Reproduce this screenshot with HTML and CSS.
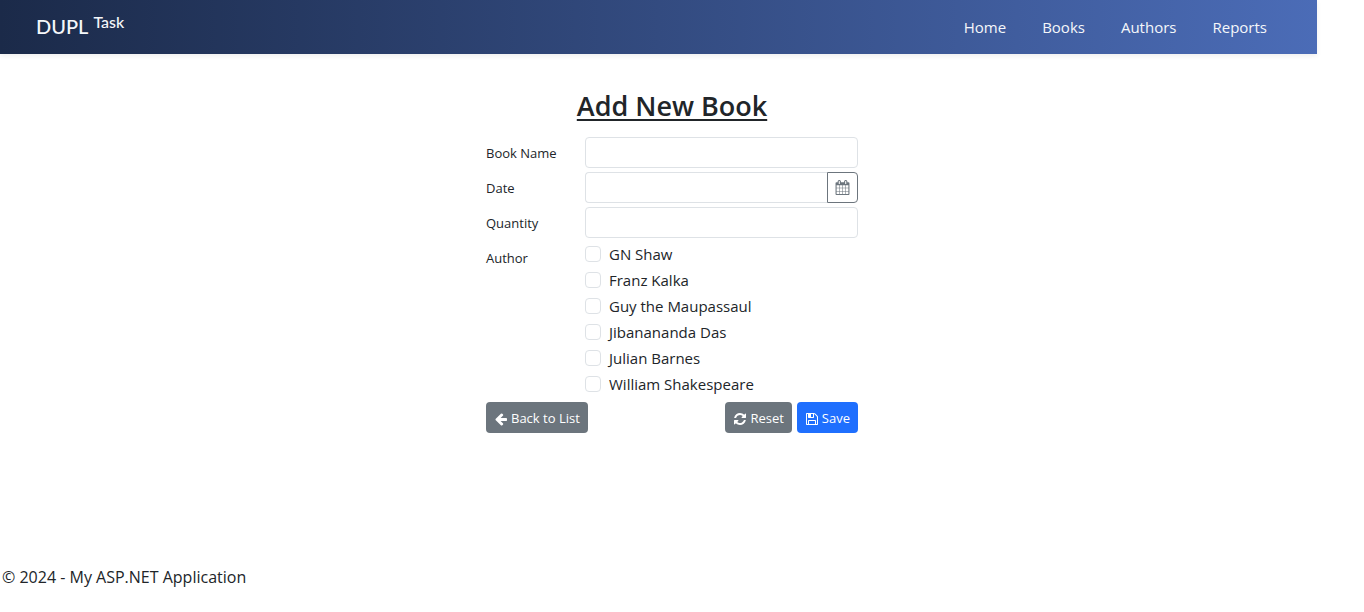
FILE: index.html
```html
<!DOCTYPE html>
<html lang="en">
<head>
<meta charset="utf-8">
<meta name="viewport" content="width=device-width, initial-scale=1">
<title>Add New Book</title>
<link rel="stylesheet" href="styles.css">
</head>
<body>
<header class="navbar">
  <a class="brand" href="#"><span class="brand-main">DUPL</span> <span class="brand-sup">Task</span></a>
  <nav class="nav">
    <a href="#">Home</a>
    <a href="#">Books</a>
    <a href="#">Authors</a>
    <a href="#">Reports</a>
  </nav>
</header>
<main class="content">
  <form class="book-form">
    <h1 class="title">Add New Book</h1>
    <div class="row">
      <label class="label" for="name">Book Name</label>
      <input class="control" id="name" type="text">
    </div>
    <div class="row">
      <label class="label" for="date">Date</label>
      <div class="input-group">
        <input class="control" id="date" type="text">
        <button class="date-btn" type="button" aria-label="Pick a date">
          <svg class="icon" viewBox="0 0 1792 1792"><path d="M192 1664h288v-288h-288v288zm352 0h320v-288h-320v288zm-352-352h288v-320h-288v320zm352 0h320v-320h-320v320zm-352-384h288v-288h-288v288zm736 736h320v-288h-320v288zm-384-736h320v-288h-320v288zm768 736h288v-288h-288v288zm-384-352h320v-320h-320v320zm-352-864v-288q0-13-9.5-22.5t-22.5-9.5h-64q-13 0-22.5 9.5t-9.5 22.5v288q0 13 9.5 22.5t22.5 9.5h64q13 0 22.5-9.5t9.5-22.5zm736 864h288v-320h-288v320zm-384-384h320v-288h-320v288zm384 0h288v-288h-288v288zm32-480v-288q0-13-9.5-22.5t-22.5-9.5h-64q-13 0-22.5 9.5t-9.5 22.5v288q0 13 9.5 22.5t22.5 9.5h64q13 0 22.5-9.5t9.5-22.5zm384-64v1280q0 52-38 90t-90 38h-1408q-52 0-90-38t-38-90v-1280q0-52 38-90t90-38h128v-96q0-66 47-113t113-47h64q66 0 113 47t47 113v96h384v-96q0-66 47-113t113-47h64q66 0 113 47t47 113v96h128q52 0 90 38t38 90z"/></svg>
        </button>
      </div>
    </div>
    <div class="row">
      <label class="label" for="quantity">Quantity</label>
      <input class="control" id="quantity" type="text">
    </div>
    <div class="row" role="group" aria-labelledby="author-label">
      <span class="label" id="author-label">Author</span>
      <div class="checks">
        <label class="check"><input type="checkbox">GN Shaw</label>
        <label class="check"><input type="checkbox">Franz Kalka</label>
        <label class="check"><input type="checkbox">Guy the Maupassaul</label>
        <label class="check"><input type="checkbox">Jibanananda Das</label>
        <label class="check"><input type="checkbox">Julian Barnes</label>
        <label class="check"><input type="checkbox">William Shakespeare</label>
      </div>
    </div>
    <div class="actions">
      <a class="btn back" href="#"><svg class="icon" viewBox="0 0 1792 1792"><path d="M1664 896v128q0 53-32.5 90.5t-84.5 37.5h-704l293 294q38 36 38 90t-38 90l-75 76q-37 37-90 37-52 0-91-37l-651-652q-37-37-37-90 0-52 37-91l651-650q38-38 91-38 52 0 90 38l75 74q38 38 38 91t-38 91l-293 293h704q52 0 84.5 37.5t32.5 90.5z"/></svg>Back to List</a>
      <button class="btn" type="reset"><svg class="icon" viewBox="0 0 1792 1792"><path d="M1639 1056q0 5-1 7-64 268-268 434.5t-478 166.5q-146 0-282.5-55t-243.5-157l-129 129q-19 19-45 19t-45-19-19-45v-448q0-26 19-45t45-19h448q26 0 45 19t19 45-19 45l-137 137q71 66 161 102t187 36q134 0 250-65t186-179q11-17 53-117 8-23 30-23h192q13 0 22.5 9.5t9.5 22.5zm25-800v448q0 26-19 45t-45 19h-448q-26 0-45-19t-19-45 19-45l138-138q-148-137-349-137-134 0-250 65t-186 179q-11 17-53 117-8 23-30 23h-199q-13 0-22.5-9.5t-9.5-22.5v-7q65-268 270-434.5t480-166.5q146 0 284 55.5t245 156.5l130-129q19-19 45-19t45 19 19 45z"/></svg>Reset</button>
      <button class="btn primary" type="submit"><svg class="icon" viewBox="0 0 1792 1792"><path d="M512 1536h768v-384h-768v384zm896 0h128v-896q0-14-10-38.5t-20-34.5l-281-281q-10-10-34-20t-39-10v416q0 40-28 68t-68 28h-576q-40 0-68-28t-28-68v-416h-128v1280h128v-416q0-40 28-68t68-28h832q40 0 68 28t28 68v416zm-384-928v-320q0-13-9.5-22.5t-22.5-9.5h-192q-13 0-22.5 9.5t-9.5 22.5v320q0 13 9.5 22.5t22.5 9.5h192q13 0 22.5-9.5t9.5-22.5zm640 32v928q0 40-28 68t-68 28h-1344q-40 0-68-28t-28-68v-1344q0-40 28-68t68-28h928q40 0 88 20t76 48l280 280q28 28 48 76t20 88z"/></svg>Save</button>
    </div>
  </form>
</main>
<footer class="footer">© 2024 - My ASP.NET Application</footer>
</body>
</html>
```
FILE: styles.css
```css
* {
  box-sizing: border-box;
}

body {
  margin: 0;
  min-height: 100vh;
  display: flex;
  flex-direction: column;
  background: #fff;
  color: #212529;
  font-family: "Segoe UI", "Open Sans", "Noto Sans", sans-serif;
  font-size: 15px;
  line-height: 24px;
}

.navbar {
  display: flex;
  align-items: flex-start;
  justify-content: space-between;
  margin-right: 47px;
  padding: 11px 50px 12px 36px;
  min-height: 54px;
  background: linear-gradient(to right, #1b2a49, #4b6cb7);
  box-shadow: 0 2px 5px rgba(0, 0, 0, 0.07);
}

.brand {
  display: flex;
  align-items: flex-start;
  gap: 5px;
  color: #f5f7fa;
  font-family: Lato, sans-serif;
  font-weight: 500;
  text-decoration: none;
}

.brand-main {
  font-size: 20px;
  line-height: 31px;
}

.brand-sup {
  font-size: 16px;
  line-height: 21px;
}

.nav {
  display: flex;
  gap: 36px;
  padding-top: 4px;
}

.nav a {
  color: #f5f7fa;
  font-weight: 500;
  text-decoration: none;
}

.content {
  flex: 1;
  padding: 32px 20px 24px 0;
}

.book-form {
  display: flex;
  flex-direction: column;
  gap: 4px;
  max-width: 372px;
  margin: 0 auto;
}

.title {
  margin: 0 0 8px;
  font-size: 27px;
  font-weight: 600;
  line-height: 39px;
  text-align: center;
  text-decoration: underline;
  text-decoration-thickness: 2px;
  text-underline-offset: 3px;
}

.row {
  display: grid;
  grid-template-columns: 99px 1fr;
}

.label {
  padding: 6px 0 4px;
  font-size: 13px;
  line-height: 21px;
}

.control {
  width: 100%;
  min-width: 0;
  height: 31px;
  padding: 4px 8px;
  border: 1px solid #dee2e6;
  border-radius: 4px;
  background: #fff;
  color: inherit;
  font: inherit;
}

.input-group {
  display: flex;
}

.input-group .control {
  border-right: 0;
  border-radius: 4px 0 0 4px;
}

.date-btn {
  display: flex;
  align-items: center;
  justify-content: center;
  flex: 0 0 31px;
  padding: 0;
  border: 1px solid #6c757d;
  border-radius: 0 4px 4px 0;
  background: #fff;
  color: #6c757d;
}

.icon {
  width: 14px;
  height: 14px;
  fill: currentColor;
}

.date-btn .icon {
  width: 15px;
  height: 15px;
}

.checks {
  display: flex;
  flex-direction: column;
  gap: 2px;
}

.check {
  display: flex;
  align-items: center;
  gap: 8px;
}

.check input {
  appearance: none;
  width: 16px;
  height: 16px;
  margin: 0;
  border: 1px solid #dee2e6;
  border-radius: 4px;
  background: #fff;
}

.check input:checked {
  background: #0d6efd;
}

.actions {
  display: flex;
  gap: 5px;
  padding-top: 2px;
}

.btn {
  display: inline-flex;
  align-items: center;
  gap: 3px;
  padding: 6px 8px 4px;
  border: 0;
  border-radius: 4px;
  background: #6c757d;
  color: #fff;
  font-family: inherit;
  font-size: 13px;
  line-height: 21px;
  text-decoration: none;
}

.back {
  margin-right: auto;
}

.primary {
  background: #1f6ffe;
}

.footer {
  padding: 0 2px 23px;
  font-size: 16px;
}
```
